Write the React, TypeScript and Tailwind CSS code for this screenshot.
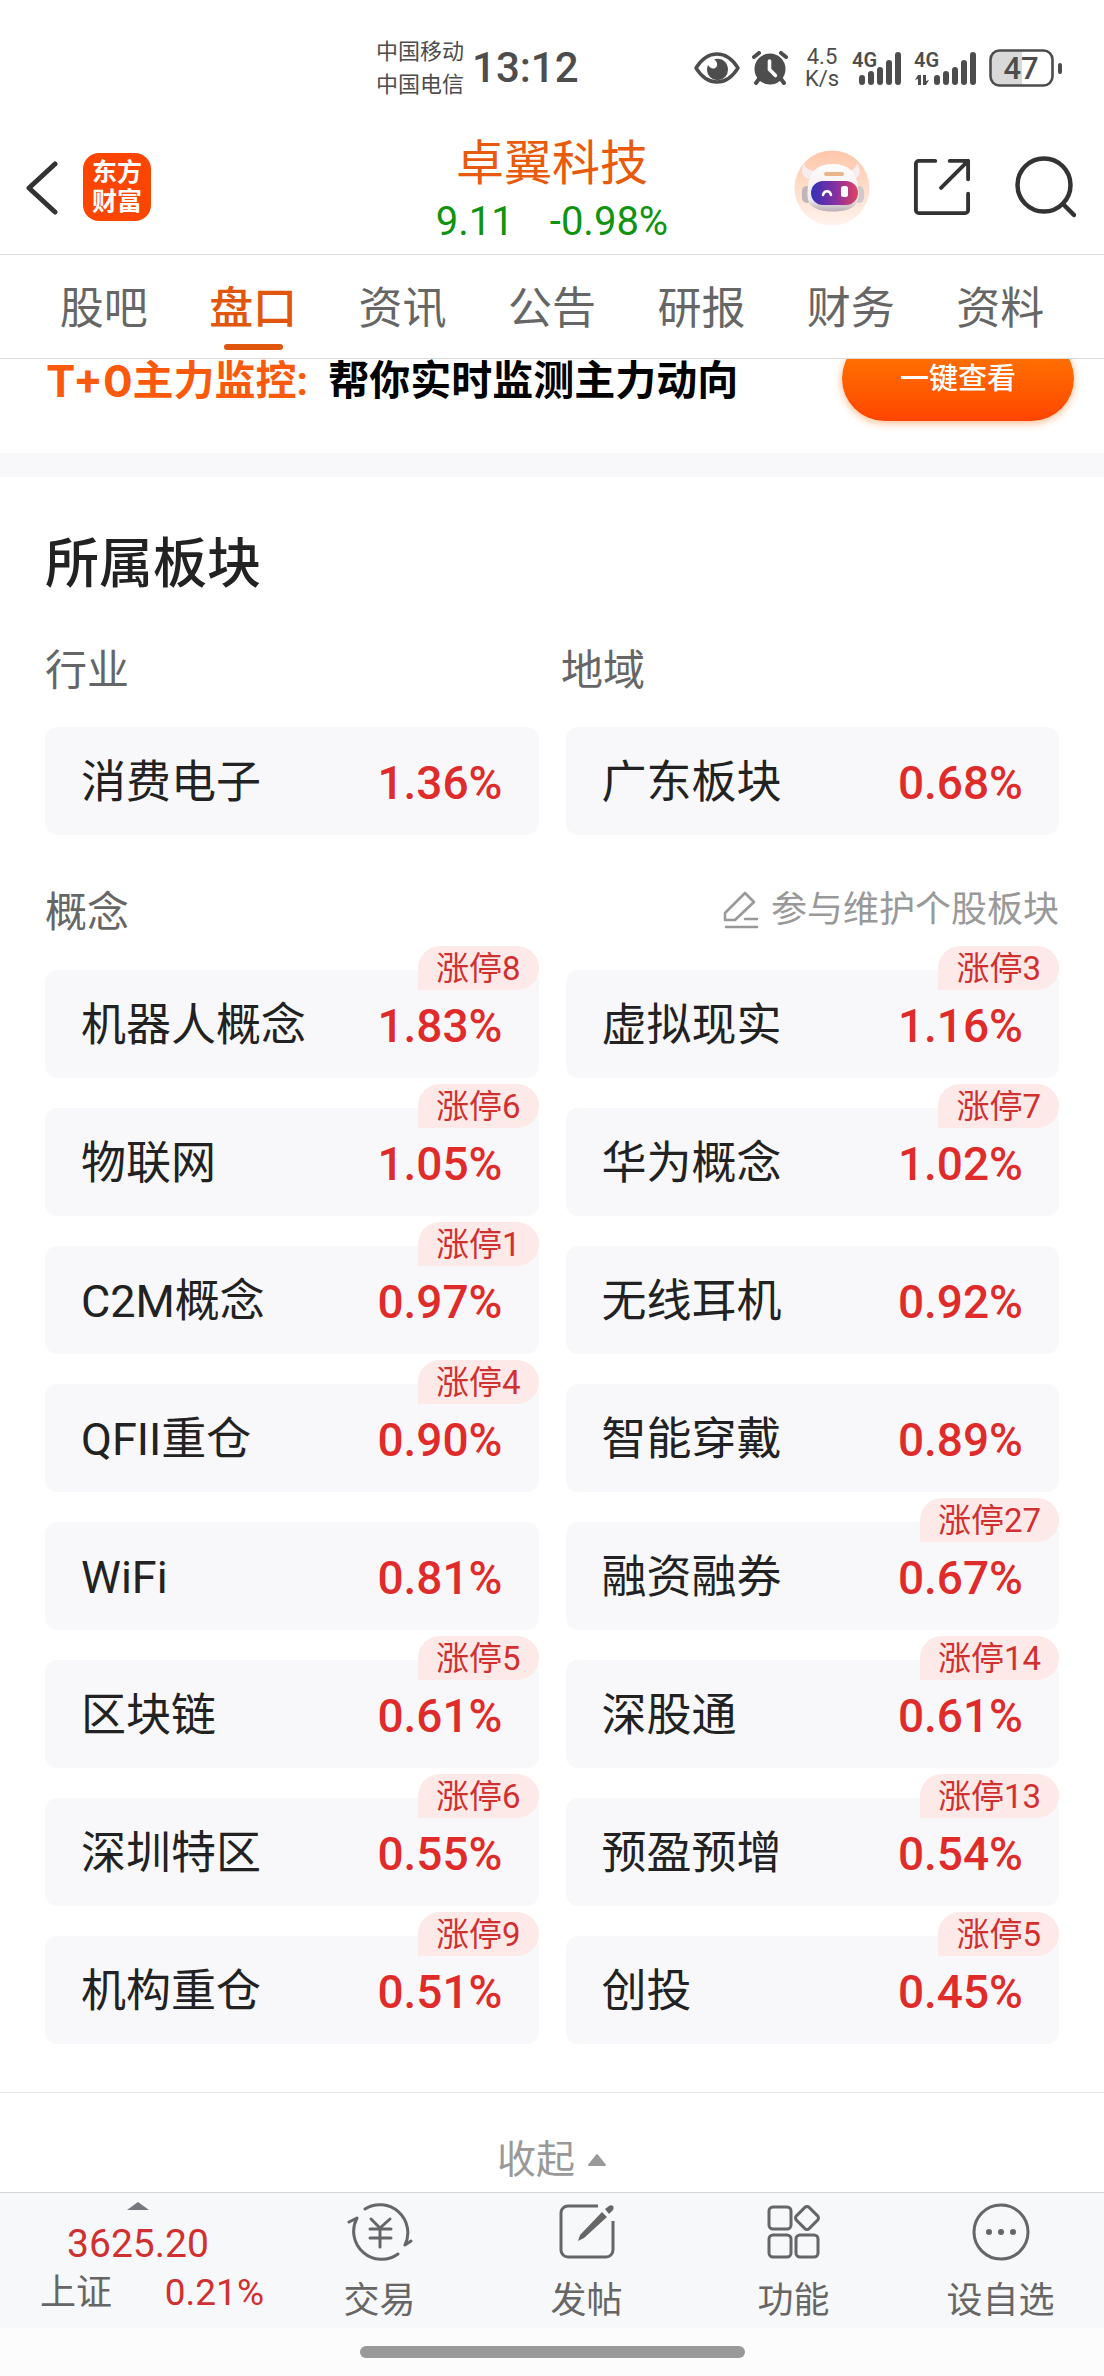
type Board = {
  name: string;
  change: string;
  limitUp?: number;
};

const tabs = ['股吧', '盘口', '资讯', '公告', '研报', '财务', '资料'];

const concepts: Board[] = [
  { name: '机器人概念', change: '1.83%', limitUp: 8 },
  { name: '虚拟现实', change: '1.16%', limitUp: 3 },
  { name: '物联网', change: '1.05%', limitUp: 6 },
  { name: '华为概念', change: '1.02%', limitUp: 7 },
  { name: 'C2M概念', change: '0.97%', limitUp: 1 },
  { name: '无线耳机', change: '0.92%' },
  { name: 'QFII重仓', change: '0.90%', limitUp: 4 },
  { name: '智能穿戴', change: '0.89%' },
  { name: 'WiFi', change: '0.81%' },
  { name: '融资融券', change: '0.67%', limitUp: 27 },
  { name: '区块链', change: '0.61%', limitUp: 5 },
  { name: '深股通', change: '0.61%', limitUp: 14 },
  { name: '深圳特区', change: '0.55%', limitUp: 6 },
  { name: '预盈预增', change: '0.54%', limitUp: 13 },
  { name: '机构重仓', change: '0.51%', limitUp: 9 },
  { name: '创投', change: '0.45%', limitUp: 5 },
];

const EyeIcon = () => (
  <svg className="w-[46px] h-[32px]" viewBox="0 0 46 32" fill="none">
    <path d="M2 16C7 8 14 2 23 2s16 6 21 14c-5 8-12 14-21 14S7 24 2 16Z" stroke="#4d4d4d" strokeWidth="3.4" strokeLinejoin="round" />
    <path d="M20 7.500C27 5 34 10 34 17.500A10.500 10.500 0 0 1 13 18c0-2 .4-3.500 1.200-5 1.500 3 4.500 4.500 7 3 3-1.800 2.500-6.500-1.200-8.500Z" fill="#4d4d4d" />
  </svg>
);

const AlarmIcon = () => (
  <svg className="w-[36px] h-[34px]" viewBox="0 0 36 34" fill="none" strokeLinecap="round">
    <circle cx="18" cy="18" r="15.500" fill="#4d4d4d" />
    <path d="M2 6l5-4M34 6l-5-4M7 28l-3 4M29 28l3 4" stroke="#4d4d4d" strokeWidth="4" />
    <path d="M17.500 10v8.500l6 6" stroke="#fff" strokeWidth="3.600" />
  </svg>
);

const SignalIcon = ({ data }: { data?: boolean }) => (
  <svg className={data ? 'w-[63px] h-[46px]' : 'w-[50px] h-[46px]'} viewBox={data ? '-13 -6 63 46' : '0 -6 50 46'} fill="#4d4d4d">
    <text x={data ? -13 : 0} y="16" fontSize="20" fontWeight="600" fontFamily="Roboto, sans-serif">4G</text>
    {data && <path d="M-9 24h3v10h-3v-6l-3 1zM-4 24h3v6l3-1-3 5h-3z" />}
    <rect x="7" y="24" width="6" height="10" rx="3" />
    <rect x="16" y="20" width="6" height="14" rx="3" />
    <rect x="25" y="16" width="6" height="18" rx="3" />
    <rect x="34" y="9" width="6" height="25" rx="3" />
    <rect x="43" y="1" width="6" height="33" rx="3" />
  </svg>
);

const RobotAvatar = () => (
  <svg className="w-[76px] h-[76px]" viewBox="0 0 76 76">
    <defs>
      <linearGradient id="avatarBg" x1="0" y1="0" x2="0" y2="1">
        <stop offset="0" stopColor="#ffc6a8" />
        <stop offset="1" stopColor="#fff3ee" />
      </linearGradient>
      <linearGradient id="visor" x1="0" y1="0" x2="1" y2="0">
        <stop offset="0" stopColor="#3430b8" />
        <stop offset=".55" stopColor="#8a2fa0" />
        <stop offset="1" stopColor="#e0455e" />
      </linearGradient>
      <linearGradient id="shell" x1="0" y1="0" x2="0" y2="1">
        <stop offset="0" stopColor="#fffdfd" />
        <stop offset=".75" stopColor="#f1eaec" />
        <stop offset="1" stopColor="#b9adb3" />
      </linearGradient>
    </defs>
    <circle cx="38" cy="38" r="37.500" fill="url(#avatarBg)" />
    <path d="M10 13c-4 8-2 15 6 16l6-8c-7 0-11-3-12-8ZM63 13c5 8 3 15-4 16l-6-8c6 0 9-3 10-8Z" fill="#f6eeee" />
    <rect x="8" y="36" width="10" height="17" rx="5" fill="#bfb6ba" />
    <rect x="60" y="36" width="10" height="17" rx="5" fill="#d2c8cc" />
    <path d="M14 36c1-15 10-22 25-22s23 8 25 22c1 8 1 13-2 18-6 10-40 10-46 0-3-5-3-10-2-18Z" fill="url(#shell)" />
    <rect x="30" y="22" width="20" height="4" rx="2" fill="#eab48a" />
    <rect x="17" y="31" width="47" height="24" rx="12" fill="url(#visor)" />
    <path d="M29 45c1-5 7-5 8 0" stroke="#fff" strokeWidth="2.500" fill="none" strokeLinecap="round" />
    <rect x="47" y="36" width="7" height="11" rx="2.500" fill="#fff" />
  </svg>
);

const StatusBar = () => (
  <div className="flex h-[136px] items-center pl-[376px] pr-[42px] text-[#4d4d4d]">
    <div className="text-[22px] leading-[33px]">
      <p>中国移动</p>
      <p>中国电信</p>
    </div>
    <time className="ml-2 text-[42px] leading-[48px] font-medium">13:12</time>
    <div className="ml-auto flex items-center">
      <EyeIcon />
      <span className="ml-3"><AlarmIcon /></span>
      <div className="ml-4 w-9 text-center text-[22px] leading-[22px]">
        <p>4.5</p>
        <p>K/s</p>
      </div>
      <span className="ml-3"><SignalIcon /></span>
      <span className="ml-3"><SignalIcon data /></span>
      <svg className="ml-3 w-[73px] h-[38px]" viewBox="0 0 73 38" fill="none">
        <path d="M10 2h23v34H10a8 8 0 0 1-8-8V10a8 8 0 0 1 8-8Z" fill="#d9d9d9" />
        <rect x="1.500" y="1.500" width="62" height="35" rx="9" stroke="#4d4d4d" strokeWidth="2.600" />
        <rect x="69" y="14" width="4" height="11" rx="2" fill="#4d4d4d" />
        <text x="32" y="30" textAnchor="middle" fontSize="31" fontWeight="500" fontFamily="Roboto, sans-serif" fill="#4d4d4d">47</text>
      </svg>
    </div>
  </div>
);

const Header = () => (
  <header className="grid h-[119px] grid-cols-[1fr_auto_1fr] border-b border-[#dcdcdc]">
    <div className="flex items-start gap-6 pt-[17px] pl-[25px]">
      <button aria-label="返回" className="pt-2">
        <svg className="w-[34px] h-[54px]" viewBox="0 0 34 54" fill="none" stroke="#333" strokeWidth="5" strokeLinecap="round" strokeLinejoin="round">
          <path d="M30 3L4 27l26 24" />
        </svg>
      </button>
      <a href="#home" className="flex h-[68px] w-[68px] flex-col items-center justify-center rounded-2xl bg-[#fc4500] text-[25px] leading-[29px] font-bold text-white">
        <span>东方</span>
        <span>财富</span>
      </a>
    </div>
    <div className="flex flex-col items-center">
      <h1 className="text-[48px] leading-[56px] text-[#e85a0c]">卓翼科技</h1>
      <p className="flex gap-9 text-[40px] leading-[60px] text-[#10930f]">
        <span>9.11</span>
        <span>-0.98%</span>
      </p>
    </div>
    <div className="flex items-start justify-end gap-[43px] pt-[14px] pr-7">
      <button aria-label="智能助手"><RobotAvatar /></button>
      <button aria-label="分享" className="pt-2">
        <svg className="w-[58px] h-[58px]" viewBox="0 0 60 60" fill="none" stroke="#333" strokeWidth="4" strokeLinecap="round" strokeLinejoin="round">
          <path d="M23 3H6a3 3 0 0 0-3 3v48a3 3 0 0 0 3 3h48a3 3 0 0 0 3-3V37M38 3h19v19M57 3L29 31" />
        </svg>
      </button>
      <button aria-label="搜索" className="pt-1.5">
        <svg className="w-[62px] h-[62px]" viewBox="0 0 62 62" fill="none" stroke="#333" strokeWidth="4.500" strokeLinecap="round">
          <circle cx="30" cy="29" r="26.500" />
          <path d="M49 48l11 11" />
        </svg>
      </button>
    </div>
  </header>
);

const BoardCard = ({ name, change, limitUp }: Board) => (
  <a href={`#${name}`} className="relative flex h-[108px] items-center justify-between rounded-xl bg-[#f8f8fa] px-9 pt-[3px]">
    <span className="text-[45px] leading-[56px] text-[#222]">{name}</span>
    <span className="text-[46px] leading-[56px] font-medium text-[#e02b2b]">{change}</span>
    {limitUp && (
      <span className="absolute -top-6 right-0 h-11 rounded-t-[22px] rounded-br-[22px] bg-[#fde9e8] px-[18px] text-[33px] leading-[46px] text-[#d13030]">
        涨停{limitUp}
      </span>
    )}
  </a>
);

const navItems = [
  {
    label: '交易',
    icon: (
      <>
        <path d="M18 8A28 28 0 0 1 58 44l6-4M51 53A28 28 0 0 1 10 17l-8 4" />
        <path d="M24 18l9 9 10-9M33 27v19M23 28h21M23 37h21" />
      </>
    ),
  },
  {
    label: '发帖',
    icon: (
      <>
        <path d="M44 5H14a7 7 0 0 0-7 7v37a7 7 0 0 0 7 7h38a7 7 0 0 0 7-7V20" strokeLinecap="butt" />
        <path d="M48 11l5 5-23 21-6 3 2-6ZM51 8l4-3c3-2 6 1 4 4l-4 4Z" fill="#666" stroke="none" />
      </>
    ),
  },
  {
    label: '功能',
    icon: (
      <>
        <rect x="8" y="6" width="22" height="22" rx="4" />
        <rect x="8" y="34" width="22" height="22" rx="4" />
        <rect x="35" y="34" width="22" height="22" rx="4" />
        <rect x="37" y="8" width="18" height="18" rx="3" transform="rotate(45 46 17)" />
      </>
    ),
  },
  {
    label: '设自选',
    icon: (
      <>
        <circle cx="33" cy="31" r="27" />
        <g fill="#666" stroke="none">
          <circle cx="21" cy="31" r="3" />
          <circle cx="33" cy="31" r="3" />
          <circle cx="45" cy="31" r="3" />
        </g>
      </>
    ),
  },
];

const BottomNav = () => (
  <nav className="grid h-[136px] grid-cols-[1fr_3fr] border-t border-[#d5d5d5] bg-[#f7f8fa]">
    <a href="#index" className="flex flex-col items-center pt-[9px] text-[#d13030]">
      <svg className="w-[22px] h-[8px]" viewBox="0 0 22 8"><path d="M0 8L11 0l11 8Z" fill="#77777d" /></svg>
      <span className="mt-2.5 text-[39px] leading-[48px]">3625.20</span>
      <span className="flex w-full justify-between pr-3 pl-10 text-[37px] leading-[50px]">
        <span className="text-[36px] text-[#666]">上证</span>
        <span>0.21%</span>
      </span>
    </a>
    <div className="grid grid-cols-4">
      {navItems.map((item) => (
        <button key={item.label} className="flex flex-col items-center pt-2 text-[36px] leading-[48px] text-[#666]">
          <svg className="w-[66px] h-[62px]" viewBox="0 0 66 62" fill="none" stroke="#666" strokeWidth="3" strokeLinecap="round" strokeLinejoin="round">
            {item.icon}
          </svg>
          <span className="mt-3.5">{item.label}</span>
        </button>
      ))}
    </div>
  </nav>
);

const App = () => {
  return (
    <div className="bg-white font-[Roboto,'Noto_Sans_CJK_SC',sans-serif]">
      <StatusBar />
      <Header />

      <div role="tablist" className="grid h-[104px] grid-cols-7 border-b border-[#dcdcdc] px-[29px]">
        {tabs.map((tab) => {
          const active = tab === '盘口';
          return (
            <button
              key={tab}
              role="tab"
              aria-selected={active}
              className={`flex flex-col items-center pt-[26px] text-[44px] leading-[56px] ${active ? 'font-medium text-[#e0560c]' : 'text-[#666]'}`}
            >
              {tab}
              {active && <span className="mt-[7px] h-1.5 w-[59px] rounded-full bg-[#e0560c]" />}
            </button>
          );
        })}
      </div>

      <section className="flex h-[94px] items-start justify-between pr-5 pl-[46px]">
        <p className="flex items-center text-[41px] leading-[44px] font-bold text-black">
          <span className="flex items-center text-[#fb5a0c]">
            <span className="font-[Inter,sans-serif] text-[44px]">T+0</span>主力监控:
          </span>
          <span className="ml-5">帮你实时监测主力动向</span>
        </p>
        {/* the pill slides under the tab bar, only its lower part shows */}
        <div className="flex h-[76px] items-end overflow-hidden px-2.5 pb-[14px]">
          <button className="h-[85px] w-[232px] rounded-full bg-linear-to-b from-[#ff7a00] to-[#ff4400] text-[29px] leading-[40px] font-medium text-white shadow-[0_2px_8px_#ffb98a]">
            一键查看
          </button>
        </div>
      </section>
      <div className="h-6 bg-[#f8f8fa]" />

      <main className="px-[45px] pt-[52px] pb-12">
        <h2 className="text-[54px] leading-[72px] font-medium text-[#222]">所属板块</h2>
        <div className="mt-[42px] grid grid-cols-2 gap-[18px] text-[42px] leading-[56px] text-[#666]">
          <h3>行业</h3>
          <h3>地域</h3>
        </div>
        <div className="mt-7 grid grid-cols-2 gap-[27px]">
          <BoardCard name="消费电子" change="1.36%" />
          <BoardCard name="广东板块" change="0.68%" />
        </div>

        <div className="mt-[50px] flex items-center justify-between">
          <h3 className="text-[42px] leading-[56px] text-[#666]">概念</h3>
          <a href="#edit" className="flex items-center gap-3 pb-1.5 text-[36px] leading-[48px] text-[#999]">
            <svg className="w-[36px] h-[38px]" viewBox="0 0 36 38" fill="none" stroke="#999" strokeWidth="2.600" strokeLinecap="round" strokeLinejoin="round">
              <path d="M2 22L22 2l9 9-19 18H2ZM22 28h12M3 36h31" />
            </svg>
            参与维护个股板块
          </a>
        </div>
        <div className="mt-[29px] grid grid-cols-2 gap-x-[27px] gap-y-[30px]">
          {concepts.map((board) => (
            <BoardCard key={board.name} {...board} />
          ))}
        </div>
      </main>

      <button className="flex h-[100px] w-full items-center justify-center gap-3 border-t border-[#e3e3e3] pt-[34px] text-[39px] leading-[56px] text-[#999]">
        收起
        <svg className="w-[20px] h-[14px]" viewBox="0 0 20 14"><path d="M10 2l8 10H2Z" fill="#999" stroke="#999" strokeWidth="2" strokeLinejoin="round" /></svg>
      </button>

      <BottomNav />
      <div className="flex h-12 items-center justify-center bg-[#fcfcfc]">
        <div className="h-3 w-[385px] rounded-full bg-[#999]" />
      </div>
    </div>
  );
};

export default App;
